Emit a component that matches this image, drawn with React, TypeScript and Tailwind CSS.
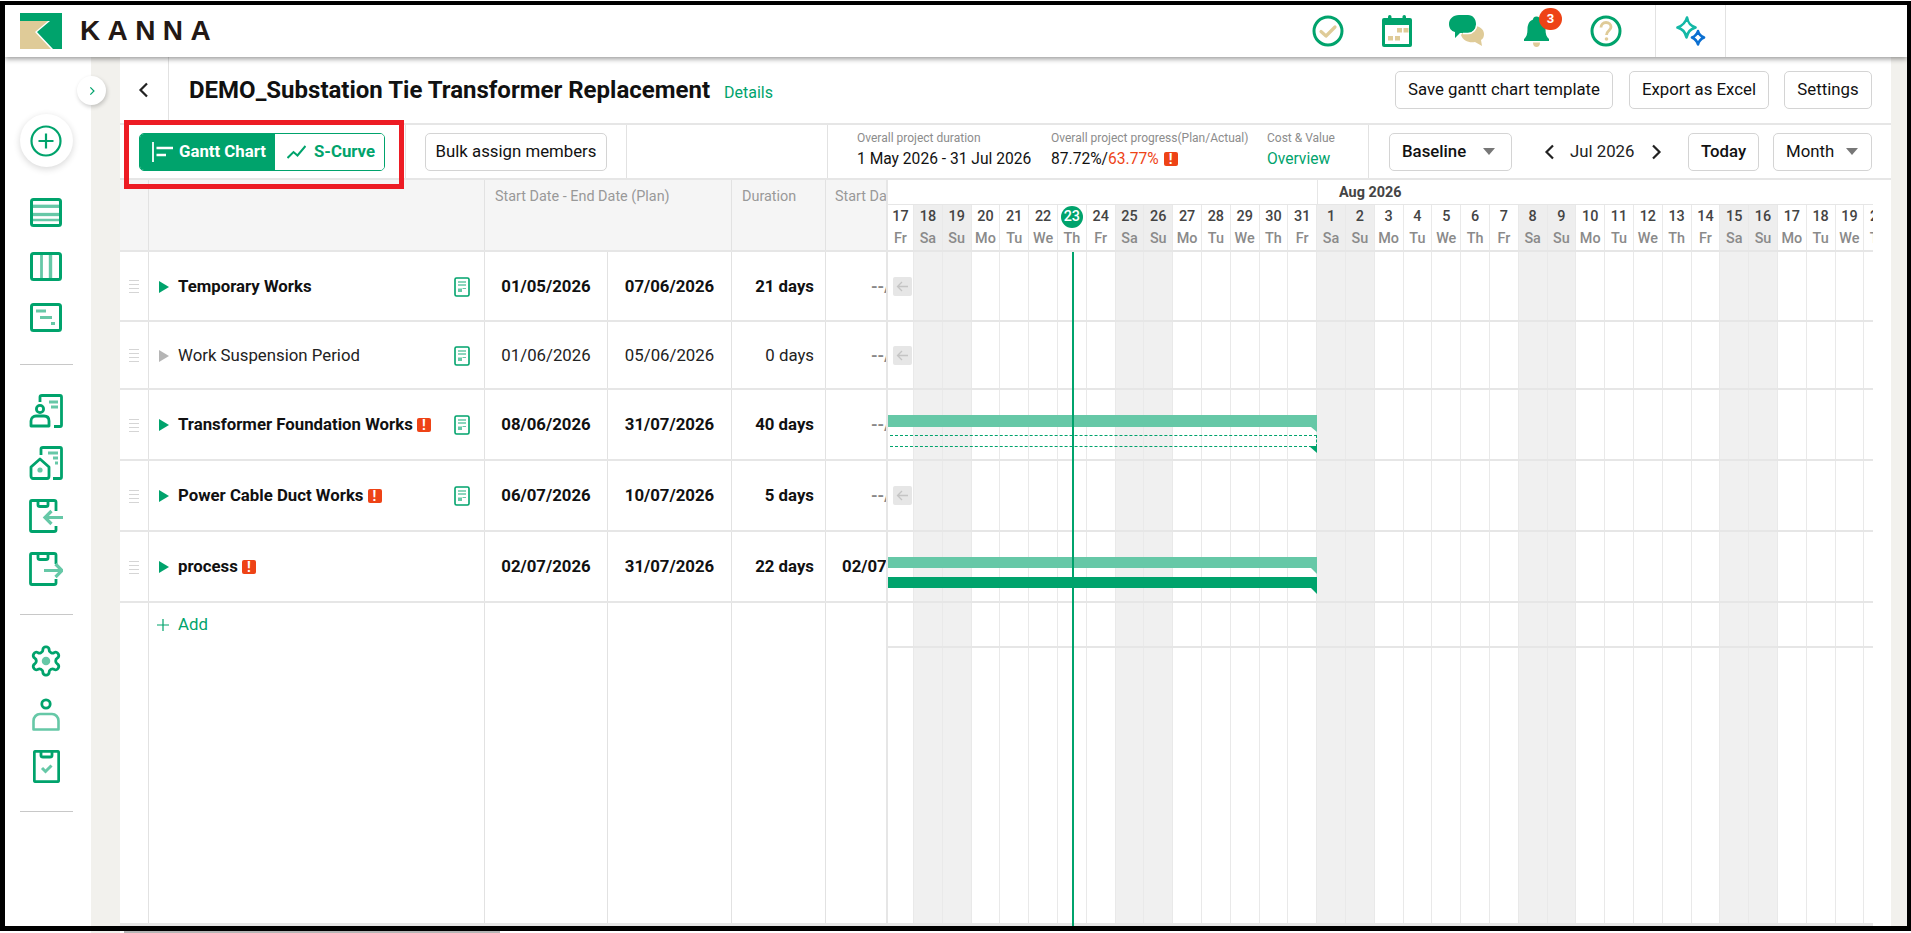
import React from "react";

const G = "#00a36c";
const L = "#66c8a7";
const Y = "#dfcb98";

function Logo() {
  return (
    <svg width="42" height="36" viewBox="0 0 42 36">
      <path d="M0 0H42V36H33L17 19L30 8H0Z" fill={G} />
      <path d="M0 8H28L15 19L31 36H0Z" fill={Y} />
    </svg>
  );
}

function Ic({ w, h, vb, className, children }: { w: number; h: number; vb?: string; className?: string; children: React.ReactNode }) {
  return (
    <svg width={w} height={h} viewBox={vb ?? `0 0 ${w} ${h}`} fill="none" className={className}>
      {children}
    </svg>
  );
}

function Warn() {
  return (
    <span className="inline-flex w-[14px] h-[14px] rounded-[2px] bg-[#ee4316] text-white items-center justify-center text-[14px] font-bold leading-none shrink-0">
      !
    </span>
  );
}

function Btn({ className, children }: { className?: string; children: React.ReactNode }) {
  return (
    <div className={`flex items-center h-[38px] rounded-[5px] border border-[#d4d4d4] bg-white text-[16.8px] text-[#111] shrink-0 whitespace-nowrap ${className ?? ""}`}>
      {children}
    </div>
  );
}

function Caret() {
  return (
    <svg width="12" height="7" viewBox="0 0 12 7">
      <path d="M0 0H12L6 7Z" fill="#777" />
    </svg>
  );
}

function Chev({ dir, className, color = "#222", size = 18 }: { dir: "l" | "r"; className?: string; color?: string; size?: number }) {
  return (
    <svg width={size} height={size} viewBox="0 0 18 18" fill="none" className={`shrink-0 ${className ?? ""}`}>
      <path d={dir === "l" ? "M12 2.5L5.5 9L12 15.5" : "M6 2.5L12.5 9L6 15.5"} stroke={color} strokeWidth="2.2" />
    </svg>
  );
}

function DocIcon() {
  return (
    <svg width="16" height="20" viewBox="0 0 16 20" fill="none">
      <rect x="1" y="1" width="14" height="18" rx="1.5" stroke={G} strokeWidth="1.6" />
      <path d="M4 5H12M4 8H12" stroke={L} strokeWidth="1.4" />
      <path d="M8.5 11.5H12" stroke={L} strokeWidth="1" />
      <rect x="4" y="11.5" width="4" height="3.5" fill={L} />
    </svg>
  );
}

function Drag() {
  return (
    <div className="flex flex-col gap-[3px] w-[10px]">
      <div className="h-px bg-[#d5d5d5]" />
      <div className="h-px bg-[#d5d5d5]" />
      <div className="h-px bg-[#d5d5d5]" />
      <div className="h-px bg-[#d5d5d5]" />
    </div>
  );
}

type RowData = {
  name: string;
  bold: boolean;
  gray?: boolean;
  warn?: boolean;
  doc?: boolean;
  start: string;
  end: string;
  dur: string;
  s: string;
  h: string;
  arrow?: boolean;
  bars?: "dash" | "solid";
};

const rows: RowData[] = [
  { name: "Temporary Works", bold: true, doc: true, start: "01/05/2026", end: "07/06/2026", dur: "21 days", s: "--/", h: "h-[70px]", arrow: true },
  { name: "Work Suspension Period", bold: false, gray: true, doc: true, start: "01/06/2026", end: "05/06/2026", dur: "0 days", s: "--/", h: "h-[68px]", arrow: true },
  { name: "Transformer Foundation Works", bold: true, warn: true, doc: true, start: "08/06/2026", end: "31/07/2026", dur: "40 days", s: "--/", h: "h-[71px]", bars: "dash" },
  { name: "Power Cable Duct Works", bold: true, warn: true, doc: true, start: "06/07/2026", end: "10/07/2026", dur: "5 days", s: "--/", h: "h-[71px]", arrow: true },
  { name: "process", bold: true, warn: true, start: "02/07/2026", end: "31/07/2026", dur: "22 days", s: "02/07/2026", h: "h-[71px]", bars: "solid" },
];

const WD = ["Su", "Mo", "Tu", "We", "Th", "Fr", "Sa"];
const days: { d: number; w: string; wk: boolean }[] = [];
for (let i = 0; i < 35; i++) {
  const dow = (5 + i) % 7;
  const d = i < 15 ? 17 + i : i - 14;
  days.push({ d, w: WD[dow], wk: dow === 0 || dow === 6 });
}

const cellLine = "border-r border-[#e2e2e2]";

function TableRow({ r }: { r: RowData }) {
  const weight = r.bold ? "font-bold" : "font-normal text-[#222]";
  return (
    <div className={`flex ${r.h} border-b-2 border-[#e6e6e6] text-[16.8px] text-[#111]`}>
      <div className={`w-[29px] ${cellLine} flex items-center justify-center pt-[1px]`}>
        <Drag />
      </div>
      <div className={`w-[336px] ${cellLine} flex items-center pl-[10px] pr-[14px] pt-[1px]`}>
        <svg width="10" height="12" viewBox="0 0 10 12" className="shrink-0">
          <path d="M0 0L10 6L0 12Z" fill={r.gray ? "#b5b5b5" : G} />
        </svg>
        <span className={`ml-[9px] whitespace-nowrap ${weight}`}>{r.name}</span>
        {r.warn && <span className="ml-[4px] flex"><Warn /></span>}
        <span className="flex-1" />
        {r.doc && <DocIcon />}
      </div>
      <div className={`w-[123px] ${cellLine} flex items-center justify-center pt-[1px] ${weight}`}>{r.start}</div>
      <div className={`w-[124px] ${cellLine} flex items-center justify-center pt-[1px] ${weight}`}>{r.end}</div>
      <div className={`w-[94px] ${cellLine} flex items-center justify-end pr-[11px] pt-[1px] ${weight}`}>{r.dur}</div>
      <div className={`flex-1 flex items-center overflow-hidden whitespace-nowrap font-bold pt-[1px] ${r.s === "--/" ? "pl-[45px] text-[#888]" : "pl-[16px]"}`}>{r.s}</div>
    </div>
  );
}

function Fold({ color, className, w = 7, h = 6 }: { color: string; className: string; w?: number; h?: number }) {
  return (
    <svg width={w} height={h} viewBox={`0 0 ${w} ${h}`} className={`absolute ${className}`}>
      <path d={`M0 0H${w}V${h}Z`} fill={color} />
    </svg>
  );
}

function GanttRow({ r }: { r: RowData }) {
  return (
    <div className={`relative ${r.h} border-b-2 border-[#e6e6e6]`}>
      {r.arrow && (
        <div className={`absolute left-[5px] ${r.h === "h-[68px]" ? "top-[24px]" : "top-[25px]"} w-[19px] h-[19px] rounded-[2px] bg-[#e6e6e6] flex items-center justify-center`}>
          <svg width="13" height="13" viewBox="0 0 13 13" fill="none">
            <path d="M12 6.5H1.5M6 2L1.5 6.5L6 11" stroke="#c4c4c4" strokeWidth="1.3" />
          </svg>
        </div>
      )}
      {r.bars === "dash" && (
        <>
          <div className="absolute left-0 top-[25px] w-[429px] h-[12px] bg-[#66c8a7]" />
          <Fold color={L} className="left-[423px] top-[37px]" h={5} w={6} />
          <div className="absolute left-[2px] top-[45px] w-[427px] h-[12px] border-y border-r border-dashed border-[#00a36c]" />
          <Fold color={G} className="left-[421px] top-[56px]" w={8} h={7} />
        </>
      )}
      {r.bars === "solid" && (
        <>
          <div className="absolute left-0 top-[25px] w-[429px] h-[11px] bg-[#66c8a7]" />
          <Fold color={L} className="left-[423px] top-[36px]" w={6} />
          <div className="absolute left-0 top-[45px] w-[429px] h-[11px] bg-[#00a36c]" />
          <Fold color={G} className="left-[423px] top-[56px]" w={6} />
        </>
      )}
    </div>
  );
}

function Gantt() {
  return (
    <div className="w-[987px] shrink-0 flex flex-col overflow-hidden border-l-2 border-[#e6e6e6] -ml-[2px]">
      <div className="h-[25px] shrink-0 flex border-b border-[#e6e6e6]">
        <div className="w-[430px] border-r border-[#e6e6e6] shrink-0" />
        <div className="pl-[21px] text-[14.4px] font-bold text-[#444] leading-[25px]">Aug 2026</div>
      </div>
      <div className="h-[47px] shrink-0 flex border-b-2 border-[#e6e6e6]">
        {days.map((x, i) => (
          <div
            key={i}
            className={`${i === 0 ? "w-[26px]" : "w-[28.8px]"} shrink-0 flex flex-col items-center border-r border-[#e9e9e9] ${x.wk ? "bg-[#eeeeee]" : "bg-white"}`}
          >
            {x.d === 23 && i === 6 ? (
              <span className="mt-[1px] w-[22px] h-[22px] rounded-full bg-[#00a36c] text-white text-[14.4px] font-medium flex items-center justify-center">23</span>
            ) : (
              <span className="mt-[1px] h-[22px] text-[14.4px] font-medium text-[#444] leading-[22px]">{x.d}</span>
            )}
            <span className="mt-[1px] text-[14.4px] text-[#8a8a8a] font-medium leading-[20px]">{x.w}</span>
          </div>
        ))}
      </div>
      <div className="relative flex-1 min-h-0">
        <div className="absolute inset-0 flex">
          {days.map((x, i) => (
            <div key={i} className={`${i === 0 ? "w-[26px]" : "w-[28.8px]"} shrink-0 border-r border-[#e9e9e9] ${x.wk ? "bg-[#f0f0f0]" : ""}`} />
          ))}
        </div>
        <div className="relative flex flex-col h-full">
          {rows.map((r) => (
            <GanttRow key={r.name} r={r} />
          ))}
          <div className="h-[45px] shrink-0 border-b-2 border-[#e6e6e6]" />
          <div className="flex-1 border-b-[3px] border-[#e6e6e6]" />
        </div>
        <div className="absolute left-[184px] top-0 bottom-0 w-[2px] bg-[#00a36c]" />
      </div>
    </div>
  );
}

function Sidebar() {
  const side = "flex justify-center shrink-0";
  const divider = "h-px w-[53px] bg-[#c8c8c8] shrink-0";
  return (
    <div className="relative w-[86px] shrink-0 bg-white flex flex-col items-center pr-[4px]">
      <div className="absolute left-[72px] top-[19px] w-[29px] h-[29px] rounded-full bg-white shadow-[1px_2px_4px_rgba(0,0,0,0.2)] flex items-center justify-center z-10">
        <Chev dir="r" color={G} size={10} />
      </div>
      <div className="mt-[57px] w-[53px] h-[53px] rounded-full bg-white shadow-[0_2px_7px_rgba(0,0,0,0.16)] flex items-center justify-center shrink-0">
        <Ic w={32} h={32}>
          <circle cx="16" cy="16" r="14.5" stroke={G} strokeWidth="2.2" />
          <path d="M16 8.5V23.5M8.5 16H23.5" stroke={G} strokeWidth="2.2" />
        </Ic>
      </div>
      <div className={`${side} mt-[31px]`}>
        <Ic w={32} h={29}>
          <path d="M3 8.3H29" stroke={L} strokeWidth="3.3" />
          <path d="M3 16.5H29" stroke={L} strokeWidth="3.3" />
          <path d="M3 22H29" stroke={L} strokeWidth="2.5" />
          <rect x="1.5" y="1.5" width="29" height="26" rx="2" stroke={G} strokeWidth="3" />
        </Ic>
      </div>
      <div className={`${side} mt-[25px]`}>
        <Ic w={32} h={29}>
          <path d="M11.5 3V26" stroke={L} strokeWidth="2.8" />
          <path d="M20.5 3V26" stroke={L} strokeWidth="3.4" />
          <rect x="1.5" y="1.5" width="29" height="26" rx="2" stroke={G} strokeWidth="3" />
        </Ic>
      </div>
      <div className={`${side} mt-[22px]`}>
        <Ic w={32} h={29}>
          <rect x="1.5" y="1.5" width="29" height="26" rx="2" stroke={G} strokeWidth="3" />
          <path d="M6 8H16M10 14.5H22M21 20.5H25" stroke={L} strokeWidth="3" />
        </Ic>
      </div>
      <div className={`${divider} mt-[32px]`} />
      <div className={`${side} mt-[29px]`}>
        <Ic w={34} h={34}>
          <path d="M11 8V3C11 2 12 1.5 13 1.5H31C32 1.5 32.5 2 32.5 3V31C32.5 32 32 32.5 31 32.5H25" stroke={G} strokeWidth="2.8" />
          <path d="M20 8H29M22 13H29" stroke={L} strokeWidth="3" />
          <circle cx="11" cy="15" r="3.6" stroke={G} strokeWidth="2.8" />
          <path d="M2 32V27C2 23.5 4.5 22 7 22H15C18 22 20 23.5 20 27V32Z" stroke={G} strokeWidth="2.8" strokeLinejoin="round" />
        </Ic>
      </div>
      <div className={`${side} mt-[18px]`}>
        <Ic w={34} h={34}>
          <path d="M12 9V3C12 2 13 1.5 14 1.5H31C32 1.5 32.5 2 32.5 3V31C32.5 32 32 32.5 31 32.5H24" stroke={G} strokeWidth="2.8" />
          <path d="M19 7H29M24 12H29M26 17H29" stroke={L} strokeWidth="3" />
          <path d="M2 21L11 13L20 21V30C20 31.5 19 32.5 18 32.5H4C3 32.5 2 31.5 2 30Z" stroke={G} strokeWidth="2.8" strokeLinejoin="round" />
          <circle cx="11" cy="24" r="2.6" fill={L} />
        </Ic>
      </div>
      <div className={`${side} mt-[19px]`}>
        <Ic w={34} h={34}>
          <path d="M27 12V3C27 2 26 1.5 25 1.5H3C2 1.5 1.5 2 1.5 3V31C1.5 32 2 32.5 3 32.5H25C26 32.5 27 32 27 31V27" stroke={G} strokeWidth="2.8" />
          <path d="M9 2V6C9 7 10 7.5 11 7.5H17C18 7.5 19 7 19 6V2" stroke={G} strokeWidth="2.8" />
          <path d="M34 18.5H16M22.5 12L16 18.5L22.5 25" stroke={L} strokeWidth="3.2" />
        </Ic>
      </div>
      <div className={`${side} mt-[19px]`}>
        <Ic w={34} h={34}>
          <path d="M27 12V3C27 2 26 1.5 25 1.5H3C2 1.5 1.5 2 1.5 3V31C1.5 32 2 32.5 3 32.5H25C26 32.5 27 32 27 31V27" stroke={G} strokeWidth="2.8" />
          <path d="M9 2V6C9 7 10 7.5 11 7.5H17C18 7.5 19 7 19 6V2" stroke={G} strokeWidth="2.8" />
          <path d="M15 18.5H33M26.5 12L33 18.5L26.5 25" stroke={L} strokeWidth="3.2" />
        </Ic>
      </div>
      <div className={`${divider} mt-[28px]`} />
      <div className={`${side} mt-[29px]`}>
        <Ic w={34} h={34} vb="0 0 24 24">
          <path
            d="M12.22 2h-.44a2 2 0 0 0-2 2v.18a2 2 0 0 1-1 1.73l-.43.25a2 2 0 0 1-2 0l-.15-.08a2 2 0 0 0-2.73.73l-.22.38a2 2 0 0 0 .73 2.73l.15.1a2 2 0 0 1 1 1.72v.51a2 2 0 0 1-1 1.74l-.15.09a2 2 0 0 0-.73 2.73l.22.38a2 2 0 0 0 2.73.73l.15-.08a2 2 0 0 1 2 0l.43.25a2 2 0 0 1 1 1.73V20a2 2 0 0 0 2 2h.44a2 2 0 0 0 2-2v-.18a2 2 0 0 1 1-1.73l.43-.25a2 2 0 0 1 2 0l.15.08a2 2 0 0 0 2.73-.73l.22-.39a2 2 0 0 0-.73-2.73l-.15-.08a2 2 0 0 1-1-1.74v-.5a2 2 0 0 1 1-1.74l.15-.09a2 2 0 0 0 .73-2.73l-.22-.38a2 2 0 0 0-2.73-.73l-.15.08a2 2 0 0 1-2 0l-.43-.25a2 2 0 0 1-1-1.73V4a2 2 0 0 0-2-2z"
            stroke={G}
            strokeWidth="2"
          />
          <circle cx="12" cy="12" r="3" fill={L} />
        </Ic>
      </div>
      <div className={`${side} mt-[20px]`}>
        <Ic w={28} h={33}>
          <circle cx="14" cy="6" r="4.2" stroke={G} strokeWidth="2.8" />
          <path d="M1.5 31.5V23C1.5 19 4.5 16 8 16H20C23.5 16 26.5 19 26.5 23V31.5Z" stroke={L} strokeWidth="2.6" strokeLinejoin="round" />
        </Ic>
      </div>
      <div className={`${side} mt-[19px]`}>
        <Ic w={27} h={33}>
          <rect x="1.3" y="1.3" width="24.4" height="30.4" rx="1.5" stroke={G} strokeWidth="2.8" />
          <path d="M8 2V5.5C8 6.5 9 7 10 7H17C18 7 19 6.5 19 5.5V2" stroke={G} strokeWidth="2.8" />
          <path d="M9 18L12.5 21.5L18.5 15.5" stroke={L} strokeWidth="3" />
        </Ic>
      </div>
      <div className={`${divider} mt-[28px]`} />
    </div>
  );
}

export default function App() {
  const font = { fontFamily: 'Roboto, "Liberation Sans", sans-serif' };
  return (
    <div style={font} className="relative w-[1911px] h-[933px] bg-white overflow-hidden">
      <div className="mt-px h-[930px] border-t-4 border-l-[5px] border-r-4 border-b-[5px] border-black flex flex-col">
        {/* Top bar */}
        <div className="relative h-[52px] shrink-0 bg-white shadow-[0_2px_5px_rgba(0,0,0,0.4)] z-20 flex items-center">
          <div className="ml-[15px] flex">
            <Logo />
          </div>
          <span style={{ fontFamily: '"Liberation Sans", sans-serif' }} className="ml-[18px] text-[28px] leading-none font-bold tracking-[7.4px] text-[#231815]">
            KANNA
          </span>
          <div className="flex-1" />
          <div className="flex items-center h-full">
            <Ic w={32} h={32} className="mr-[38px]">
              <circle cx="16" cy="16" r="14" stroke={G} strokeWidth="3" />
              <path d="M9 16.5L14 21L23 12" stroke={Y} strokeWidth="3.2" strokeLinecap="round" strokeLinejoin="round" />
            </Ic>
            <Ic w={30} h={32} className="mr-[37px]">
              <rect x="0" y="3" width="30" height="29" rx="2" fill={G} />
              <rect x="6" y="0" width="3.5" height="6" rx="1.7" fill={G} />
              <rect x="20.5" y="0" width="3.5" height="6" rx="1.7" fill={G} />
              <rect x="3" y="10" width="24" height="19" fill="white" />
              <rect x="15" y="13" width="5" height="4.5" fill={Y} />
              <rect x="21.5" y="13" width="5" height="4.5" fill={Y} />
              <rect x="6" y="21" width="5" height="4.5" fill={Y} />
              <rect x="13" y="21" width="5" height="4.5" fill={Y} />
            </Ic>
            <Ic w={35} h={32} className="mr-[40px]">
              <path d="M19 11C28 9 35 13 35 19C35 22 34 24 32 25L33 31L26 27C20 28 14 26 12 20Z" fill={Y} />
              <path d="M10 0H19C24 0 27 4 27 9C27 14 24 18 19 18H11L6 23V17C2 16 0 13 0 9C0 4 4 0 10 0Z" fill={G} />
              <path d="M14 18.5H19C24 18.5 27.8 14 27.8 9.5" stroke="white" strokeWidth="1.5" />
            </Ic>
            <div className="relative mr-[41px] flex">
              <Ic w={25} h={32}>
                <path d="M12.5 1.5C15 1.5 16 3 16 4.5C20 6 21.5 10 21.5 14C21.5 19 22.5 22 25 24V26H0V24C2.5 22 3.5 19 3.5 14C3.5 10 5 6 9 4.5C9 3 10 1.5 12.5 1.5Z" fill={G} />
                <path d="M9 27.5H16C16 30.5 14.5 32 12.5 32C10.5 32 9 30.5 9 27.5Z" fill={Y} />
              </Ic>
              <span className="absolute left-[15px] -top-[7px] w-[23px] h-[22px] rounded-full bg-[#ee4316] text-white text-[13px] font-bold flex items-center justify-center">3</span>
            </div>
            <Ic w={32} h={32} className="mr-[33px]">
              <circle cx="16" cy="16" r="14" stroke={G} strokeWidth="3" />
              <path d="M11 12.5C11 9.5 13 7.5 16 7.5C19 7.5 21 9.5 21 12C21 15.5 16.5 15.5 16.5 20" stroke={Y} strokeWidth="2.8" />
              <circle cx="16.5" cy="24" r="1.8" fill={Y} />
            </Ic>
            <div className="w-[71px] h-full border-x border-[#e2e2e2] flex items-center justify-center">
              <Ic w={30} h={30}>
                <path d="M11 1.5C12 7 14 9.5 19.5 11.5C14 13.5 12 15.5 10.5 21.5C9 15.5 7 13.5 1.5 11.5C7 9.5 9.5 7 11 1.5Z" stroke="#14b8a6" strokeWidth="2.6" strokeLinejoin="round" />
                <path d="M22 15C22.8 18.5 24.5 20 28 21.5C24.5 23 22.8 25 22 28.5C21 25 19.5 23 16 21.5C19.5 20 21 18.5 22 15Z" stroke="#0b6fd1" strokeWidth="2.6" strokeLinejoin="round" />
              </Ic>
            </div>
            <div className="w-[181px]" />
          </div>
        </div>

        <div className="flex flex-1 min-h-0">
          <Sidebar />
          <div className="w-[29px] shrink-0 bg-[#f2f1ed]" />

          {/* Main */}
          <div className="relative w-[1771px] shrink-0 bg-white flex flex-col min-h-0">
            <div className="h-[68px] shrink-0 flex items-center border-b-2 border-[#e6e6e6]">
              <div className="w-[49px] h-full border-r border-[#e2e2e2] flex items-center justify-center">
                <Chev dir="l" />
              </div>
              <h1 className="ml-[20px] text-[24px] font-bold text-[#111] whitespace-nowrap leading-none">DEMO_Substation Tie Transformer Replacement</h1>
              <a className="ml-[14px] mt-[5px] text-[16px] text-[#00a36c]">Details</a>
              <div className="flex-1" />
              <Btn className="w-[218px] justify-center">Save gantt chart template</Btn>
              <Btn className="w-[140px] ml-[16px] justify-center">Export as Excel</Btn>
              <Btn className="w-[88px] ml-[15px] mr-[19px] justify-center">Settings</Btn>
            </div>

            <div className="h-[55px] shrink-0 flex items-center border-b-2 border-[#e6e6e6]">
              <div className="w-[286px] h-full shrink-0 border-r border-[#e2e2e2] flex items-center pl-[19px]">
                <div className="flex h-[38px] w-[246px] rounded-[5px] border border-[#00a36c] overflow-hidden">
                  <div className="w-[135px] bg-[#00a36c] text-white flex items-center pl-[12px] gap-[6px] text-[16.8px] font-bold whitespace-nowrap">
                    <Ic w={21} h={20}>
                      <path d="M1 0V20" stroke="white" strokeWidth="1.8" />
                      <path d="M4.5 6H21" stroke="white" strokeWidth="2.6" />
                      <path d="M4.5 13H14" stroke="white" strokeWidth="2.6" />
                    </Ic>
                    <span>Gantt Chart</span>
                  </div>
                  <div className="flex-1 bg-white text-[#00a36c] flex items-center pl-[12px] gap-[8px] text-[16.8px] font-bold whitespace-nowrap">
                    <Ic w={19} h={14}>
                      <path d="M0.5 13L6.5 7L10.5 10.5L18.5 1" stroke={G} strokeWidth="2" />
                    </Ic>
                    <span>S-Curve</span>
                  </div>
                </div>
              </div>
              <div className="w-[221px] h-full shrink-0 border-r border-[#e2e2e2] flex items-center pl-[19px]">
                <Btn className="w-[182px] justify-center">Bulk assign members</Btn>
              </div>
              <div className="w-[201px] h-full shrink-0 border-r border-[#e2e2e2]" />
              <div className="w-[541px] h-full shrink-0 border-r border-[#e2e2e2] flex items-stretch pl-[29px]">
                <div className="w-[194px] flex flex-col pt-[5px]">
                  <span className="text-[12px] leading-[16px] text-[#8c8c8c]">Overall project duration</span>
                  <span className="mt-[3px] text-[15.6px] leading-[20px] text-[#111]">1 May 2026 - 31 Jul 2026</span>
                </div>
                <div className="w-[216px] flex flex-col pt-[5px]">
                  <span className="text-[12px] leading-[16px] text-[#8c8c8c]">Overall project progress(Plan/Actual)</span>
                  <span className="mt-[3px] text-[15.6px] leading-[20px] text-[#111] flex items-center whitespace-nowrap">
                    87.72%/<span className="text-[#ee4316]">63.77%</span>
                    <span className="ml-[5px] flex"><Warn /></span>
                  </span>
                </div>
                <div className="flex flex-col pt-[5px]">
                  <span className="text-[12px] leading-[16px] text-[#8c8c8c]">Cost &amp; Value</span>
                  <span className="mt-[3px] text-[15.6px] leading-[20px] text-[#00a36c]">Overview</span>
                </div>
              </div>
              <div className="flex-1 h-full flex items-center pl-[20px]">
                <Btn className="w-[123px] justify-between pl-[12px] pr-[16px] font-medium">
                  <span>Baseline</span>
                  <Caret />
                </Btn>
                <Chev dir="l" className="ml-[29px]" />
                <span className="ml-[11px] w-[65px] text-[16.8px] text-[#222] whitespace-nowrap">Jul 2026</span>
                <Chev dir="r" className="ml-[12px]" />
                <Btn className="w-[71px] ml-[23px] justify-center font-medium">Today</Btn>
                <Btn className="w-[99px] ml-[14px] justify-between pl-[12px] pr-[13px]">
                  <span>Month</span>
                  <Caret />
                </Btn>
              </div>
            </div>

            {/* Body */}
            <div className="flex flex-1 min-h-0">
              <div className="w-[768px] shrink-0 flex flex-col">
                <div className="h-[72px] shrink-0 flex bg-[#f5f5f5] border-b-2 border-[#e6e6e6] text-[14.4px] text-[#999]">
                  <div className={`w-[29px] ${cellLine}`} />
                  <div className={`w-[336px] ${cellLine}`} />
                  <div className={`w-[247px] ${cellLine} pl-[10px] pt-[6px]`}>Start Date - End Date (Plan)</div>
                  <div className={`w-[94px] ${cellLine} pl-[10px] pt-[6px]`}>Duration</div>
                  <div className="flex-1 pl-[9px] pt-[6px] overflow-hidden whitespace-nowrap">Start Date - End Date (Actual)</div>
                </div>
                {rows.map((r) => (
                  <TableRow key={r.name} r={r} />
                ))}
                <div className="flex h-[45px] shrink-0">
                  <div className={`w-[29px] ${cellLine}`} />
                  <div className={`w-[336px] ${cellLine} flex items-center pl-[8px] gap-[9px] text-[16.8px] text-[#00a36c] pb-[1px]`}>
                    <Ic w={12} h={12}>
                      <path d="M6 0V12M0 6H12" stroke={G} strokeWidth="1.2" />
                    </Ic>
                    <span>Add</span>
                  </div>
                  <div className={`w-[123px] ${cellLine}`} />
                  <div className={`w-[124px] ${cellLine}`} />
                  <div className={`w-[94px] ${cellLine}`} />
                  <div className="flex-1" />
                </div>
                <div className="flex flex-1 border-b-[3px] border-[#e6e6e6]">
                  <div className={`w-[29px] ${cellLine}`} />
                  <div className={`w-[336px] ${cellLine}`} />
                  <div className={`w-[123px] ${cellLine}`} />
                  <div className={`w-[124px] ${cellLine}`} />
                  <div className={`w-[94px] ${cellLine}`} />
                  <div className="flex-1" />
                </div>
              </div>
              <Gantt />
            </div>

            {/* annotation */}
            <div className="absolute left-[4px] top-[63px] w-[280px] h-[69px] border-[5px] border-[#ed1c24] pointer-events-none" />
          </div>

          <div className="flex-1 bg-[#f2f1ed]" />
        </div>
      </div>
      <div className="h-[2px] flex">
        <div className="w-[91px]" />
        <div className="w-[29px] bg-[#f2f1ed]" />
        <div className="ml-[4px] w-[376px] bg-[#b5b5b5]" />
      </div>
    </div>
  );
}
